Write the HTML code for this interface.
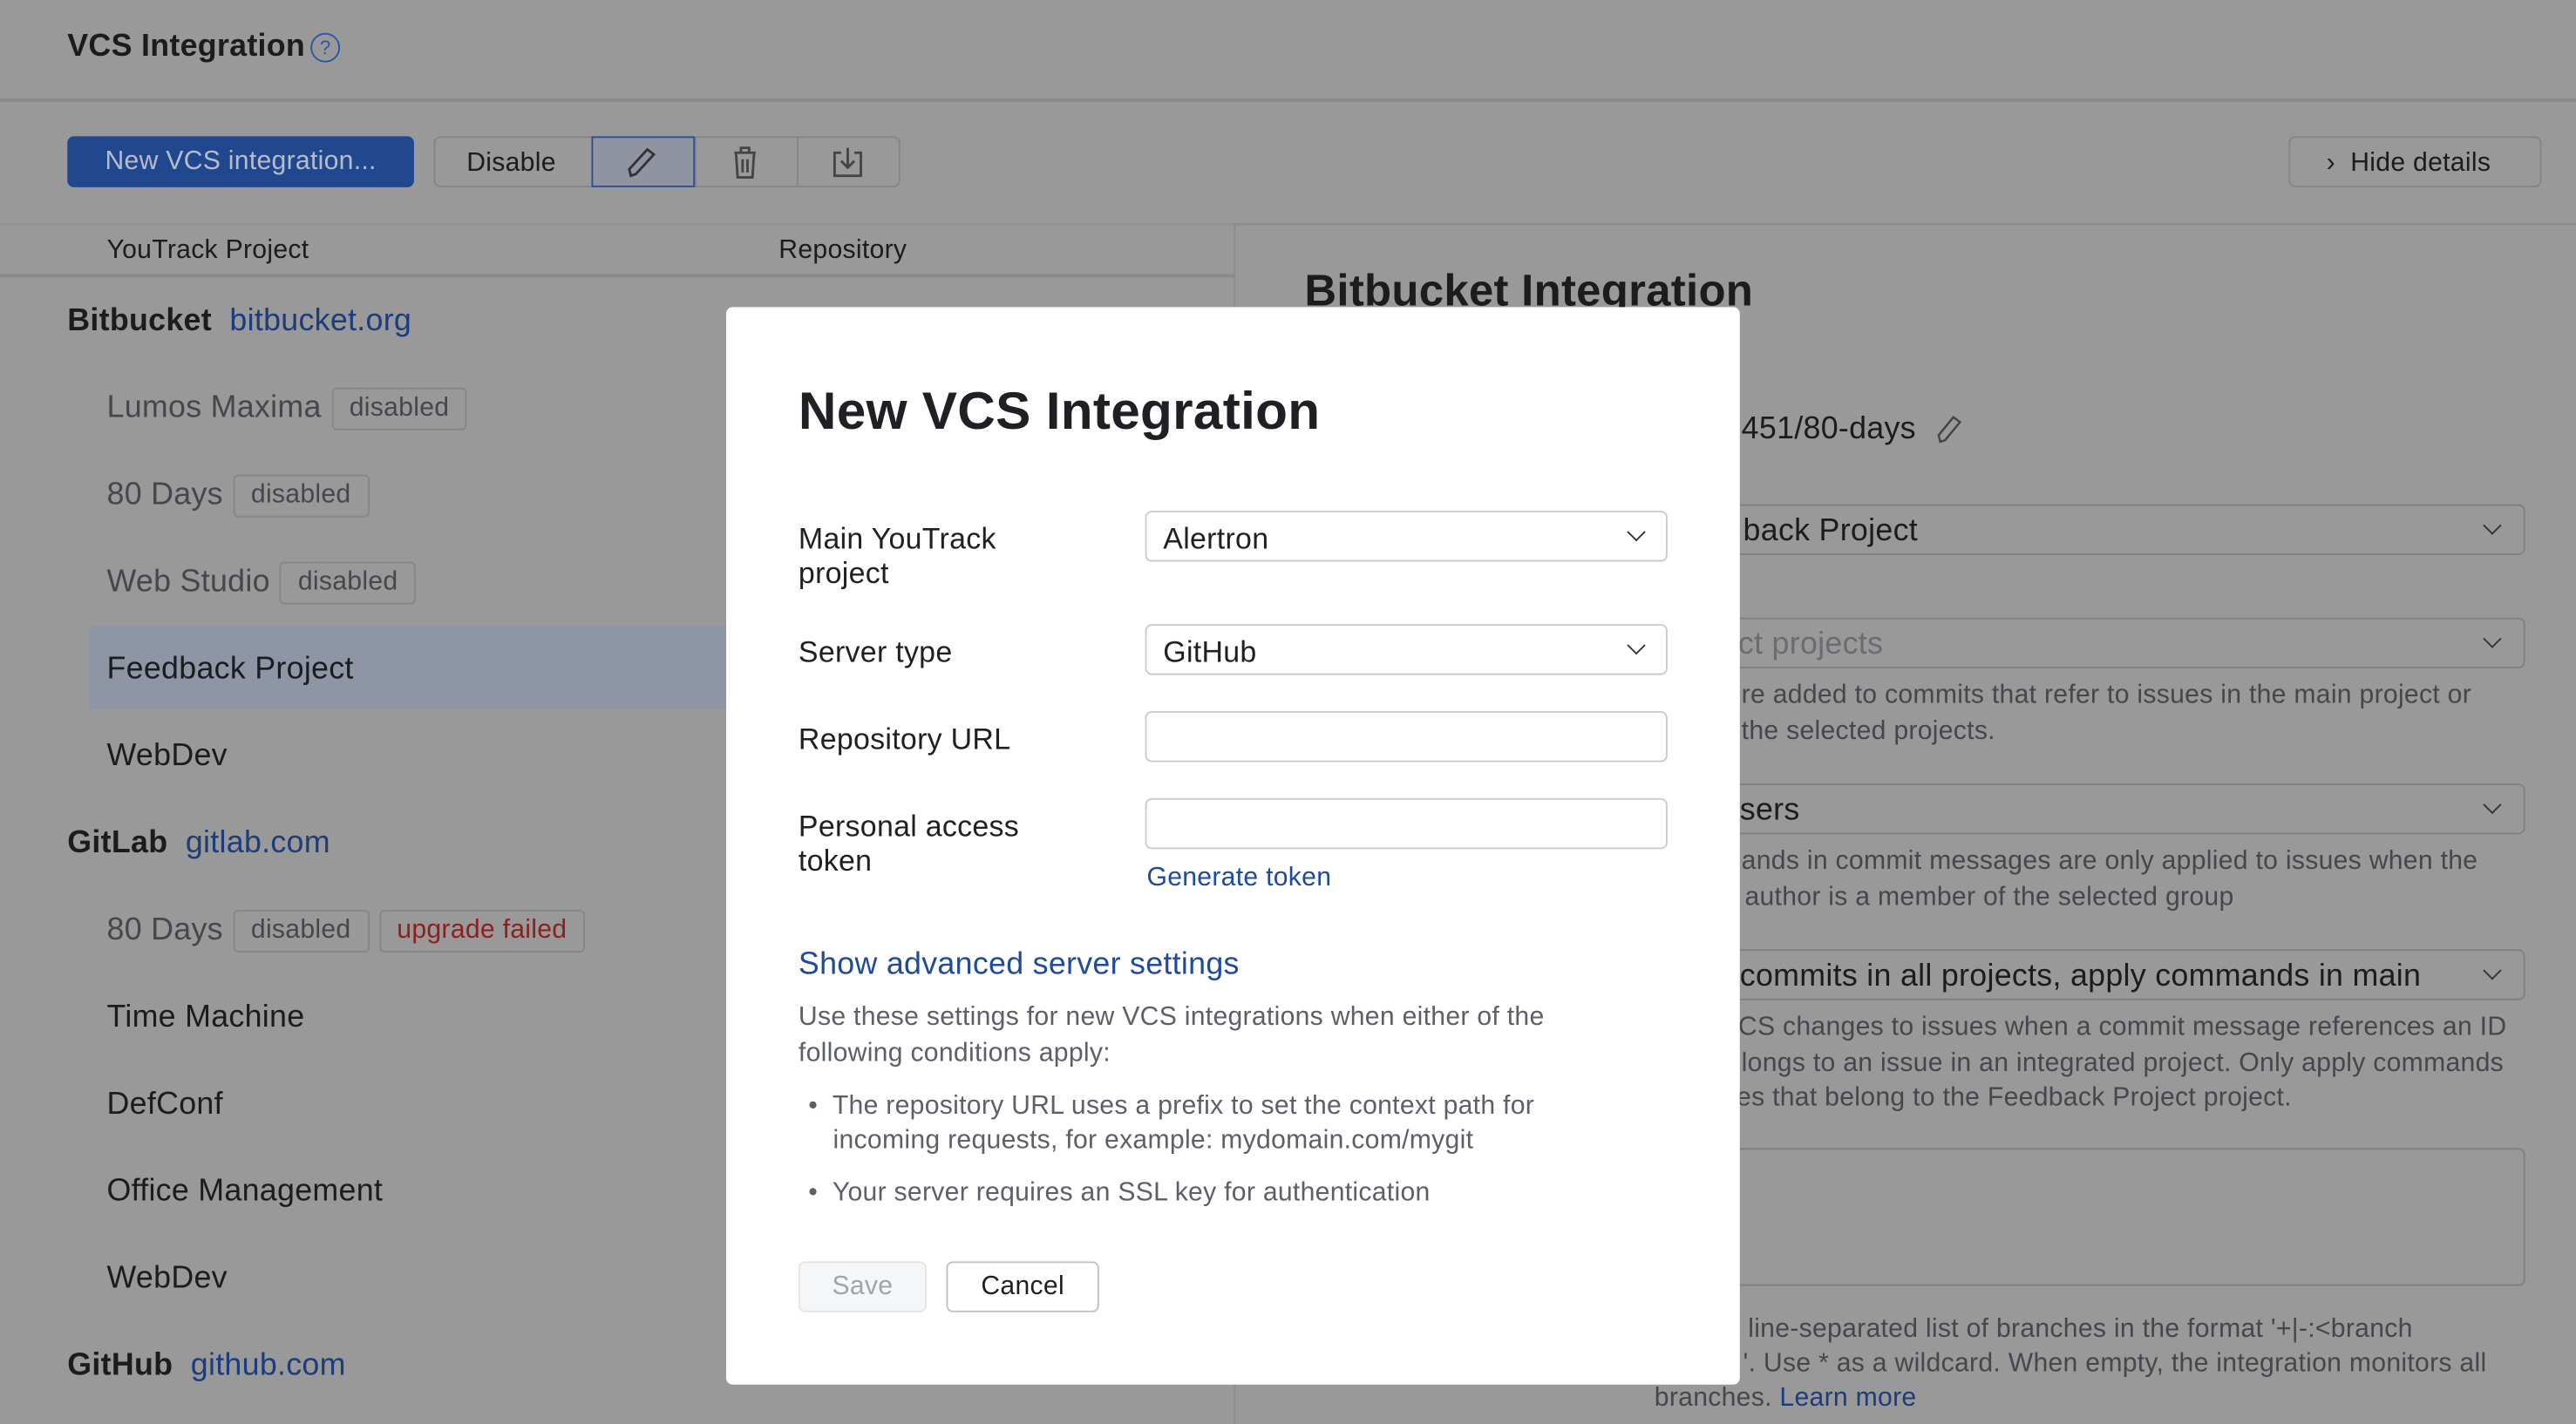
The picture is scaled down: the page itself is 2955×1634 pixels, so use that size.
<!DOCTYPE html>
<html><head><meta charset="utf-8"><style>
html,body{margin:0;padding:0;width:2955px;height:1625px;overflow:hidden;background:#999}
#w{position:absolute;left:0;top:0;width:1568px;height:863px;transform:scale(1.8846);transform-origin:0 0;background:#999;font-family:"Liberation Sans",sans-serif;color:#1c1c1f;letter-spacing:0.15px}
.t{position:absolute;white-space:nowrap;line-height:22px;margin-top:1px}
.g{color:#45474d}
.lk{color:#1c3c7c}
.tag{display:inline-block;border:1px solid #868686;border-radius:3px;padding:0 10px;font-size:16px;line-height:24px;color:#45474d;margin-left:6px;vertical-align:1px}
.box{position:absolute;border:1px solid #7f8085;border-radius:4px;box-sizing:border-box}
.chev{position:absolute;width:7px;height:7px;border-right:1.5px solid #333;border-bottom:1.5px solid #333;transform:rotate(45deg)}
.m .t{color:#1f2024}
.inp{position:absolute;left:255px;width:318px;height:31px;border:1px solid #c9cbd1;border-radius:4px;box-sizing:border-box;background:#fff}
</style></head><body><div id="w">
<div class="t" style="left:41px;top:17px;font-size:19px;font-weight:bold">VCS Integration</div>
<div style="position:absolute;left:189px;top:20px;width:16px;height:16px;border:1.5px solid #2a54a8;border-radius:50%;color:#2a54a8;font-size:12px;text-align:center;line-height:16px">?</div>
<div style="position:absolute;left:0;top:60px;width:1568px;height:2px;background:#8a8a8a"></div>
<div style="position:absolute;left:41px;top:83px;width:211px;height:31px;background:#21478f;border-radius:4px;color:#b6bccb;font-size:16px;line-height:31px;text-align:center">New VCS integration...</div>
<div class="box" style="left:264px;top:83px;width:284px;height:31px;border-color:#858585"></div>
<div class="t" style="left:284px;top:88px;font-size:16px">Disable</div>
<div style="position:absolute;left:360px;top:83px;width:63px;height:31px;box-sizing:border-box;border:1px solid #2a4e9a;background:#8f94a0"></div>
<div style="position:absolute;left:423px;top:84px;width:1px;height:29px;background:#858585"></div>
<div style="position:absolute;left:485px;top:84px;width:1px;height:29px;background:#858585"></div>
<svg style="position:absolute;left:380px;top:88px" width="22" height="22" viewBox="0 0 22 22" fill="none" stroke="#333" stroke-width="1.5"><path d="M4 19 L3 15 L14 3 L18 6 L7 18 Z"/></svg>
<svg style="position:absolute;left:444px;top:88px" width="20" height="22" viewBox="0 0 20 22" fill="none" stroke="#444" stroke-width="1.5"><path d="M3 5h13M7 5V2h5v3M4 5l1 15h9l1-15M8 9v8M11 9v8"/></svg>
<svg style="position:absolute;left:505px;top:88px" width="22" height="22" viewBox="0 0 22 22" fill="none" stroke="#444" stroke-width="1.5"><path d="M7 5H3v14h16V5h-4M11 2v12M7 10l4 4 4-4"/></svg>
<div class="box" style="left:1393px;top:83px;width:154px;height:31px;border-color:#858585"></div>
<div class="t" style="left:1416px;top:88px;font-size:16px">›&nbsp; Hide details</div>
<div style="position:absolute;left:0;top:136px;width:751px;height:1px;background:#8e8e8e"></div>
<div style="position:absolute;left:0;top:167px;width:751px;height:2px;background:#8a8a8a"></div>
<div class="t" style="left:65px;top:141px;font-size:16px">YouTrack Project</div>
<div class="t" style="left:474px;top:141px;font-size:16px">Repository</div>
<div style="position:absolute;left:751px;top:136px;width:817px;height:730px;border-left:1px solid #8a8a8a;border-top:1px solid #8a8a8a"></div>
<div class="t" style="left:794px;top:161px;font-size:27px;font-weight:bold;line-height:30px">Bitbucket Integration</div>

<div class="t" style="left:41px;top:184px;font-size:19px"><b>Bitbucket</b>&nbsp; <span class="lk">bitbucket.org</span></div>
<div class="t g" style="left:65px;top:235px;font-size:19px">Lumos Maxima<span class="tag">disabled</span></div>
<div class="t g" style="left:65px;top:288px;font-size:19px">80 Days<span class="tag">disabled</span></div>
<div class="t g" style="left:65px;top:341px;font-size:19px">Web Studio<span class="tag">disabled</span></div>
<div style="position:absolute;left:54px;top:381px;width:400px;height:51px;background:#8e96a6"></div>
<div class="t" style="left:65px;top:396px;font-size:19px">Feedback Project</div>
<div class="t" style="left:65px;top:449px;font-size:19px">WebDev</div>
<div class="t" style="left:41px;top:502px;font-size:19px"><b>GitLab</b>&nbsp; <span class="lk">gitlab.com</span></div>
<div class="t g" style="left:65px;top:553px;font-size:19px">80 Days<span class="tag">disabled</span><span class="tag" style="color:#8e1f1f">upgrade failed</span></div>
<div class="t" style="left:65px;top:608px;font-size:19px">Time Machine</div>
<div class="t" style="left:65px;top:661px;font-size:19px">DefConf</div>
<div class="t" style="left:65px;top:714px;font-size:19px">Office Management</div>
<div class="t" style="left:65px;top:767px;font-size:19px">WebDev</div>
<div class="t" style="left:41px;top:820px;font-size:19px"><b>GitHub</b>&nbsp; <span class="lk">github.com</span></div>

<div class="t" style="left:1060px;top:250px;font-size:19px">451/80-days</div>
<svg style="position:absolute;left:1178px;top:251px" width="18" height="20" viewBox="0 0 18 20" fill="none" stroke="#444" stroke-width="1.3"><path d="M3 18 L2 14 L11 3 L15 6 L6 17 Z"/></svg>
<div class="box" style="left:1040px;top:307px;width:497px;height:31px"></div><div class="t" style="left:1061px;top:312px;font-size:19px">back Project</div><div class="chev" style="left:1513px;top:316px"></div>
<div class="box" style="left:1040px;top:376px;width:497px;height:31px"></div><div class="t" style="left:1058px;top:381px;font-size:19px;color:#6a6c72">ct projects</div><div class="chev" style="left:1513px;top:385px"></div>
<div class="t g" style="left:1060px;top:412px;font-size:16px">re added to commits that refer to issues in the main project or</div>
<div class="t g" style="left:1060px;top:434px;font-size:16px">the selected projects.</div>
<div class="box" style="left:1040px;top:477px;width:497px;height:31px"></div><div class="t" style="left:1059px;top:482px;font-size:19px">sers</div><div class="chev" style="left:1513px;top:486px"></div>
<div class="t g" style="left:1060px;top:513px;font-size:16px">ands in commit messages are only applied to issues when the</div>
<div class="t g" style="left:1062px;top:535px;font-size:16px">author is a member of the selected group</div>
<div class="box" style="left:1040px;top:578px;width:497px;height:31px"></div><div class="t" style="left:1059px;top:583px;font-size:19px">commits in all projects, apply commands in main</div><div class="chev" style="left:1513px;top:587px"></div>
<div class="t g" style="left:1058px;top:614px;font-size:16px">CS changes to issues when a commit message references an ID</div>
<div class="t g" style="left:1060px;top:636px;font-size:16px">longs to an issue in an integrated project. Only apply commands</div>
<div class="t g" style="left:1057px;top:657px;font-size:16px">es that belong to the Feedback Project project.</div>
<div class="box" style="left:1040px;top:699px;width:497px;height:84px"></div>
<div class="t g" style="left:1064px;top:798px;font-size:16px">line-separated list of branches in the format '+|-:&lt;branch</div>
<div class="t g" style="left:1061px;top:819px;font-size:16px">'. Use * as a wildcard. When empty, the integration monitors all</div>
<div class="t g" style="left:1007px;top:840px;font-size:16px">branches. <span class="lk">Learn more</span></div>

<div class="m" style="position:absolute;left:442px;top:187px;width:617px;height:656px;background:#fff;border-radius:4px">
<div class="t" style="left:44px;top:44px;font-size:32px;font-weight:bold;line-height:36px">New VCS Integration</div>
<div class="t" style="left:44px;top:129px;font-size:18px">Main YouTrack</div>
<div class="t" style="left:44px;top:150px;font-size:18px">project</div>
<div class="inp" style="top:124px"></div><div class="t" style="left:266px;top:129px;font-size:18px">Alertron</div><div class="chev" style="left:550px;top:133px"></div>
<div class="t" style="left:44px;top:198px;font-size:18px">Server type</div>
<div class="inp" style="top:193px"></div><div class="t" style="left:266px;top:198px;font-size:18px">GitHub</div><div class="chev" style="left:550px;top:202px"></div>
<div class="t" style="left:44px;top:251px;font-size:18px">Repository URL</div>
<div class="inp" style="top:246px"></div>
<div class="t" style="left:44px;top:304px;font-size:18px">Personal access</div>
<div class="t" style="left:44px;top:325px;font-size:18px">token</div>
<div class="inp" style="top:299px"></div>
<div class="t" style="left:256px;top:336px;font-size:16px;color:#1f4a9e">Generate token</div>
<div class="t" style="left:44px;top:389px;font-size:19px;color:#1f4a9e">Show advanced server settings</div>
<div class="t" style="left:44px;top:421px;font-size:16px;color:#5d6069">Use these settings for new VCS integrations when either of the</div>
<div class="t" style="left:44px;top:443px;font-size:16px;color:#5d6069">following conditions apply:</div>
<div class="t" style="left:50px;top:475px;font-size:16px;color:#5d6069">•&nbsp; The repository URL uses a prefix to set the context path for</div>
<div class="t" style="left:65px;top:496px;font-size:16px;color:#5d6069">incoming requests, for example: mydomain.com/mygit</div>
<div class="t" style="left:50px;top:528px;font-size:16px;color:#5d6069">•&nbsp; Your server requires an SSL key for authentication</div>
<div style="position:absolute;left:44px;top:581px;width:78px;height:31px;box-sizing:border-box;border:1px solid #e2e4e8;border-radius:4px;background:#f5f6f8;color:#a0a4ad;font-size:16px;line-height:29px;text-align:center">Save</div>
<div style="position:absolute;left:134px;top:581px;width:93px;height:31px;box-sizing:border-box;border:1px solid #bfc2c8;border-radius:4px;background:#fff;color:#1f2024;font-size:16px;line-height:29px;text-align:center">Cancel</div>
</div>
</div></body></html>
